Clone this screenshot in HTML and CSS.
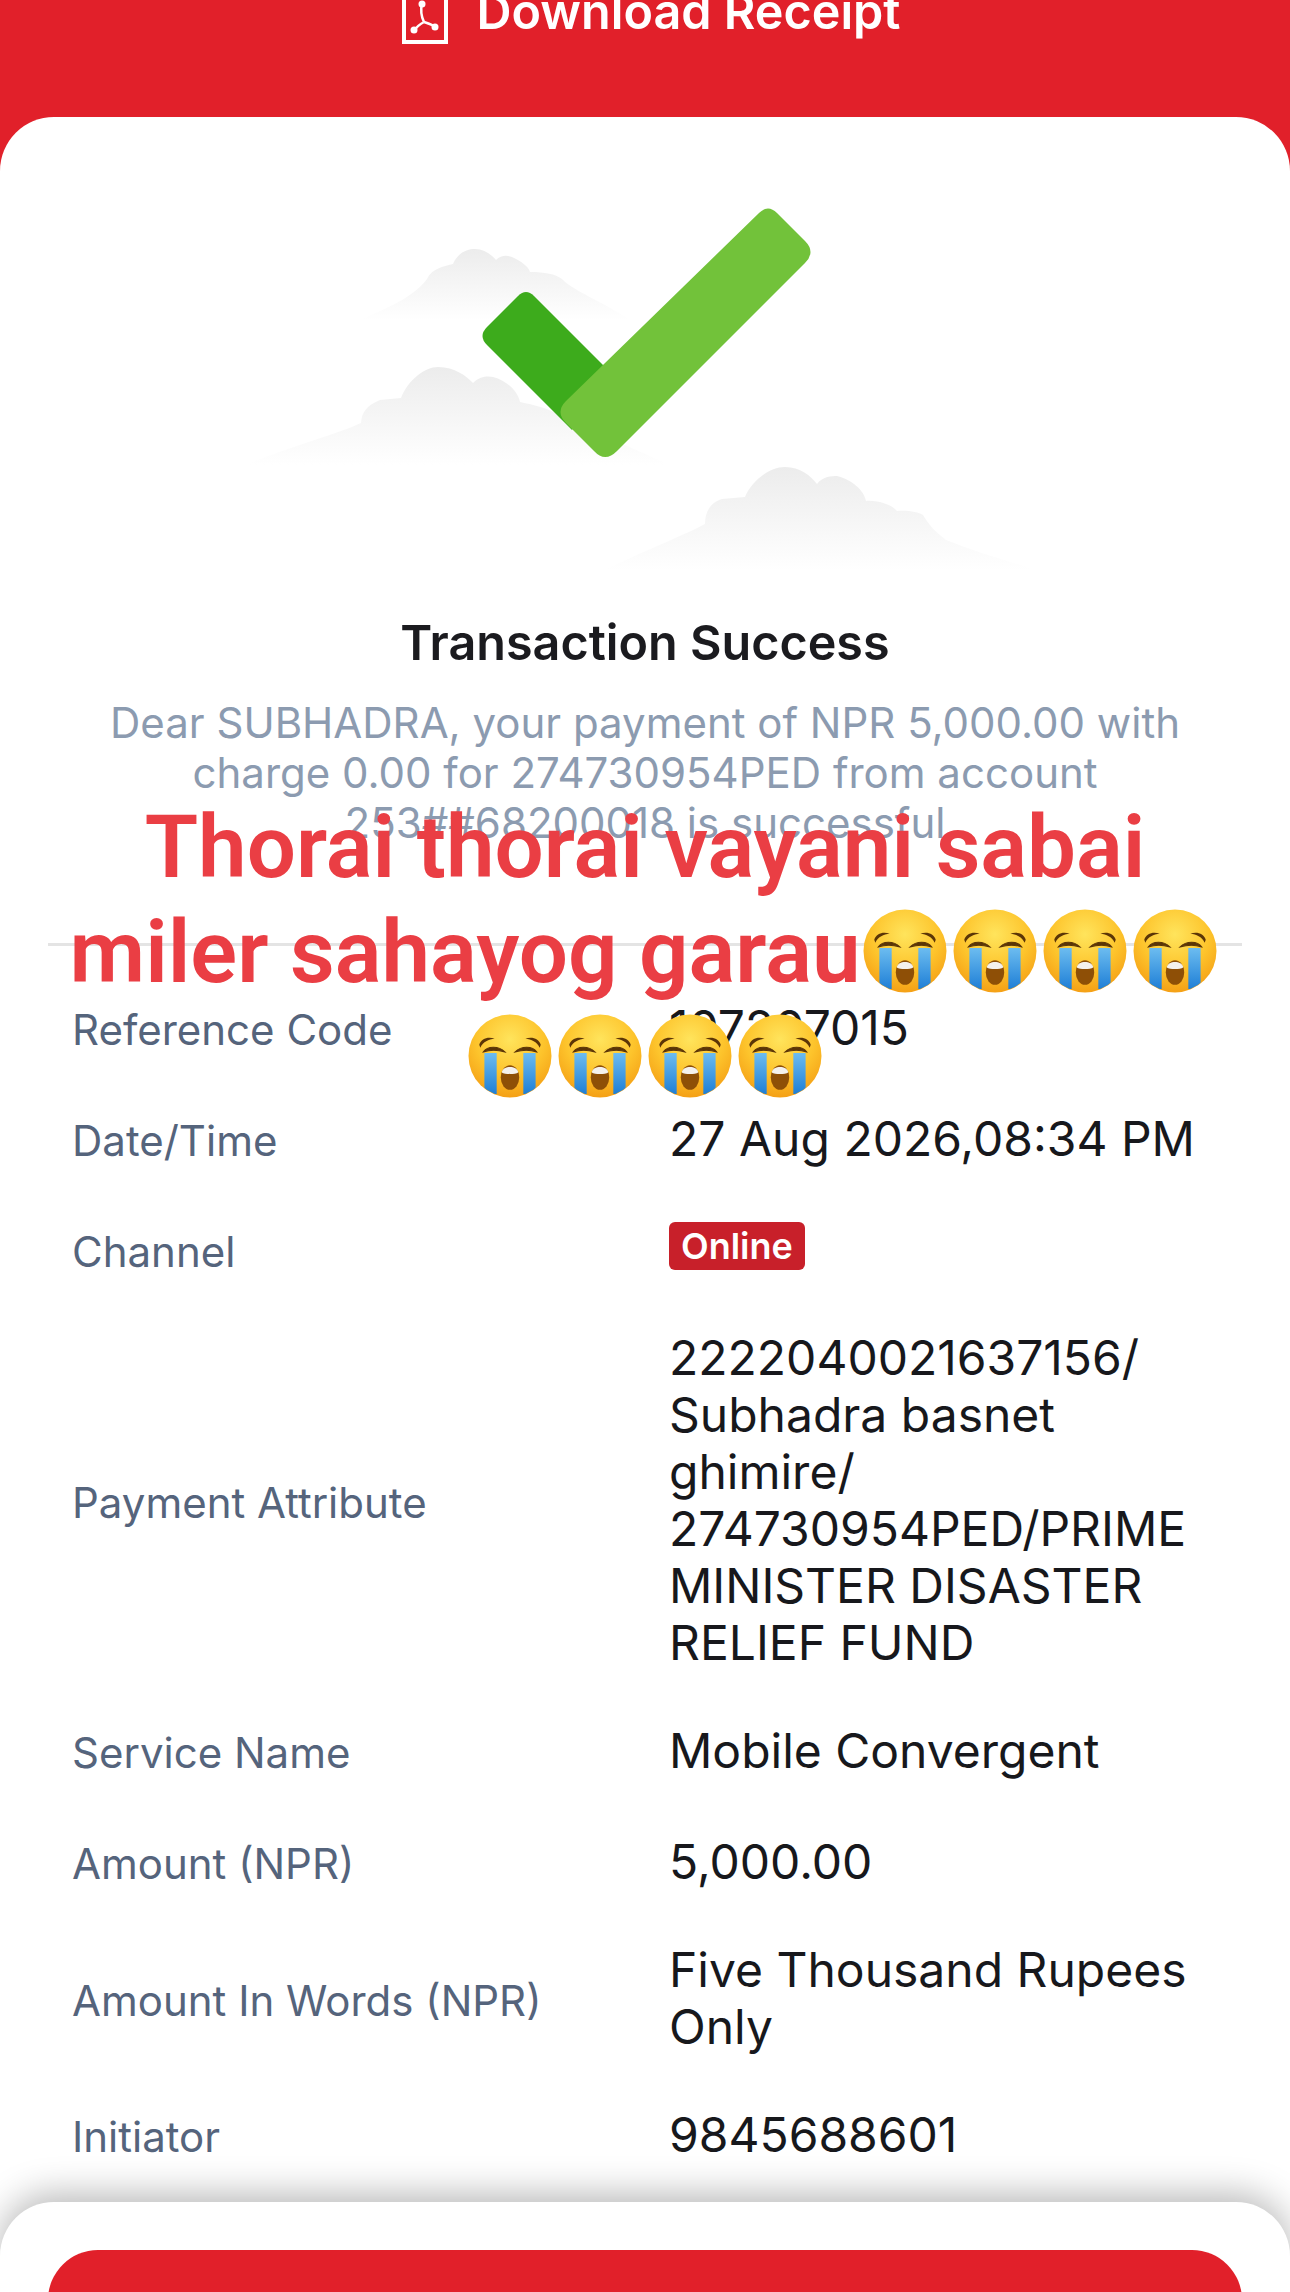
FILE: index.html
```html
<!DOCTYPE html>
<html lang="en">
<head>
<meta charset="utf-8">
<title>Transaction Success</title>
<link rel="stylesheet" href="styles.css">
</head>
<body>
<svg class="defs" width="0" height="0" aria-hidden="true">
  <defs>
    <radialGradient id="face" cx="50%" cy="30%" r="75%">
      <stop offset="0" stop-color="#ffe45c"/>
      <stop offset=".55" stop-color="#fdc42c"/>
      <stop offset="1" stop-color="#f39a12"/>
    </radialGradient>
    <linearGradient id="tear" x1="0" y1="0" x2="0" y2="1">
      <stop offset="0" stop-color="#6cbcf0"/>
      <stop offset="1" stop-color="#1f7fd6"/>
    </linearGradient>
    <linearGradient id="cloud" x1="0" y1="0" x2="0" y2="1">
      <stop offset="0" stop-color="#ececec"/>
      <stop offset="1" stop-color="#ffffff"/>
    </linearGradient>
    <clipPath id="faceClip"><circle cx="41" cy="41" r="40"/></clipPath>
    <symbol id="cry" viewBox="0 0 82 82">
      <circle cx="41" cy="41" r="40.5" fill="url(#face)"/>
      <g clip-path="url(#faceClip)">
        <path d="M16 38H28V78H16Z" fill="url(#tear)"/>
        <path d="M54 38H66V78H54Z" fill="url(#tear)"/>
      </g>
      <path d="M15 37C19 31 30 31 36 37C29 35 21 35 15 37Z" fill="#5b3507" stroke="#5b3507" stroke-width="1"/>
      <path d="M67 37C63 31 52 31 46 37C53 35 61 35 67 37Z" fill="#5b3507" stroke="#5b3507" stroke-width="1"/>
      <path d="M11 30C13 24 19 22 26 24C20 25 15 27 12 33Z" fill="#5b3507"/>
      <path d="M71 30C69 24 63 22 56 24C62 25 67 27 70 33Z" fill="#5b3507"/>
      <ellipse cx="41" cy="62" rx="9" ry="12" fill="#8e4f06"/>
      <path d="M33 57C34 50 48 50 49 57C46 59 36 59 33 57Z" fill="#f4f1ec"/>
    </symbol>
  </defs>
</svg>

<div class="screen">
  <header class="top">
    <a class="download">
      <svg class="pdf" viewBox="0 0 46 46" aria-hidden="true">
        <path d="M2 0V44H44V0" fill="none" stroke="#fff" stroke-width="4"/>
        <path d="M20 5C18 14 20 20 22 24M12 33C15 28 18 26 22 24M34 29C30 27 26 25 22 24" fill="none" stroke="#fff" stroke-width="2.5"/>
        <circle cx="20" cy="6" r="3.5" fill="#fff"/>
        <circle cx="12" cy="32" r="3.5" fill="#fff"/>
        <circle cx="33" cy="29" r="3.5" fill="#fff"/>
      </svg>
      <span>Download Receipt</span>
    </a>
  </header>

  <main class="card">
    <svg class="hero" viewBox="245 117 800 480" aria-hidden="true">
      <path d="M360 320C395 305 415 295 427 279C432 268 445 266 453 264C458 252 468 249 475 249C484 249 492 255 496 260C501 255 507 255 512 257C522 262 528 266 530 272C545 272 555 274 562 279C575 292 600 300 630 320Z" fill="url(#cloud)"/>
      <path d="M245 465C295 445 335 435 361 423C362 412 366 406 380 400L401 398C408 380 425 367 438 367C455 367 466 376 473 383C480 376 488 376 493 377C508 381 518 392 520 402C535 405 545 408 556 413C590 430 625 445 670 465Z" fill="url(#cloud)"/>
      <path d="M605 570C650 548 685 535 705 524C705 510 712 502 722 499L745 497C752 480 770 467 785 467C800 467 811 476 817 484C823 476 832 476 837 476C852 480 864 490 866 501C878 500 892 505 897 511C908 510 918 512 923 515C932 530 940 535 946 540C975 552 1005 560 1035 570Z" fill="url(#cloud)"/>
      <path d="M487 327L518 296Q526 288 534 296L607 369L572 430L487 345Q478 336 487 327Z" fill="#3dab1c"/>
      <path d="M759 213Q768 204 777 213L805 241Q816 252 805 263L617 451Q605 463 594 451L566 423Q555 412 566 401Z" fill="#72c23a"/>
    </svg>

    <h1 class="title">Transaction Success</h1>
    <p class="message">Dear SUBHADRA, your payment of NPR 5,000.00 with<br>charge 0.00 for 274730954PED from account<br>253##68200018 is successful</p>

    <dl class="details">
      <div class="row"><dt>Reference Code</dt><dd>107207015</dd></div>
      <div class="row"><dt>Date/Time</dt><dd>27 Aug 2026,08:34 PM</dd></div>
      <div class="row"><dt>Channel</dt><dd><span class="badge">Online</span></dd></div>
      <div class="row row-multi"><dt>Payment Attribute</dt><dd>2222040021637156/<br>Subhadra basnet<br>ghimire/<br>274730954PED/PRIME<br>MINISTER DISASTER<br>RELIEF FUND</dd></div>
      <div class="row"><dt>Service Name</dt><dd>Mobile Convergent</dd></div>
      <div class="row"><dt>Amount (NPR)</dt><dd>5,000.00</dd></div>
      <div class="row row-multi"><dt>Amount In Words (NPR)</dt><dd>Five Thousand Rupees<br>Only</dd></div>
      <div class="row"><dt>Initiator</dt><dd>9845688601</dd></div>
    </dl>
  </main>

  <footer class="sheet">
    <div class="action"></div>
  </footer>

  <div class="caption">
    <div class="caption-line">Thorai thorai vayani sabai</div>
    <div class="caption-line">miler sahayog garau<svg class="emoji"><use href="#cry"/></svg><svg class="emoji"><use href="#cry"/></svg><svg class="emoji"><use href="#cry"/></svg><svg class="emoji"><use href="#cry"/></svg></div>
    <div class="caption-line"><svg class="emoji"><use href="#cry"/></svg><svg class="emoji"><use href="#cry"/></svg><svg class="emoji"><use href="#cry"/></svg><svg class="emoji"><use href="#cry"/></svg></div>
  </div>
</div>
</body>
</html>
```
FILE: styles.css
```css
* { box-sizing: border-box; }

html, body {
  margin: 0;
  padding: 0;
  background: #fff;
}

body {
  font-family: Inter, "Liberation Sans", sans-serif;
  width: 1290px;
  height: 2292px;
  overflow: hidden;
}

.defs {
  position: absolute;
}

.screen {
  position: relative;
  width: 1290px;
  height: 2292px;
  overflow: hidden;
  background: #e1202a;
}

.top {
  height: 117px;
  display: flex;
  justify-content: center;
  padding-left: 12px;
}

.download {
  height: 46px;
  margin-top: -10px;
  display: flex;
  align-items: flex-start;
  gap: 29px;
  color: #fff;
  font-size: 48.5px;
  font-weight: 600;
  line-height: 44px;
}

.pdf {
  width: 46px;
  height: 46px;
  flex: none;
  margin-top: 8px;
}

.card {
  background: #fff;
  border-radius: 54px 54px 0 0;
  height: 2175px;
}

.hero {
  display: block;
  width: 800px;
  height: 480px;
  margin: 0 auto;
}

.title {
  margin: 21px 0 0;
  text-align: center;
  font-size: 48.5px;
  line-height: 50px;
  font-weight: 600;
  color: #1b1b1f;
}

.message {
  margin: 30px 0 0;
  text-align: center;
  font-size: 42px;
  line-height: 50px;
  color: #8c9bb0;
}

.details {
  margin: 95px 48px 0;
  padding: 26px 24px 0;
  border-top: 3px solid #e4e4e4;
}

.row {
  display: grid;
  grid-template-columns: 597px 1fr;
  align-items: center;
  padding: 27px 0;
}

.row-multi {
  padding: 24px 0;
}

.row dt {
  font-size: 42px;
  line-height: 57px;
  margin: 2px 0 -2px;
  color: #55647c;
}

.row dd {
  margin: 0;
  font-size: 48px;
  line-height: 57px;
  color: #17181c;
}

.badge {
  display: inline-block;
  margin-top: 1px;
  background: #c8202a;
  color: #fff;
  font-size: 36px;
  line-height: 48px;
  font-weight: 600;
  padding: 0 12px;
  border-radius: 6px;
  vertical-align: top;
}

.sheet {
  position: absolute;
  left: 0;
  right: 0;
  bottom: 0;
  height: 90px;
  padding: 48px 48px 0;
  background: #fff;
  border-radius: 54px 54px 0 0;
  box-shadow: 0 -8px 36px rgba(0, 0, 0, .28);
}

.action {
  height: 100px;
  background: #e1202a;
  border-radius: 50px;
}

.caption {
  position: absolute;
  left: 0;
  right: 0;
  top: 795px;
  text-align: center;
  font-family: Roboto, "Liberation Sans", sans-serif;
  font-size: 87px;
  font-weight: 600;
  line-height: 105px;
  color: #ea3e44;
}

.caption-line {
  height: 105px;
  white-space: nowrap;
}

.emoji {
  width: 84px;
  height: 84px;
  margin: 0 3px;
  vertical-align: -11px;
}
```
